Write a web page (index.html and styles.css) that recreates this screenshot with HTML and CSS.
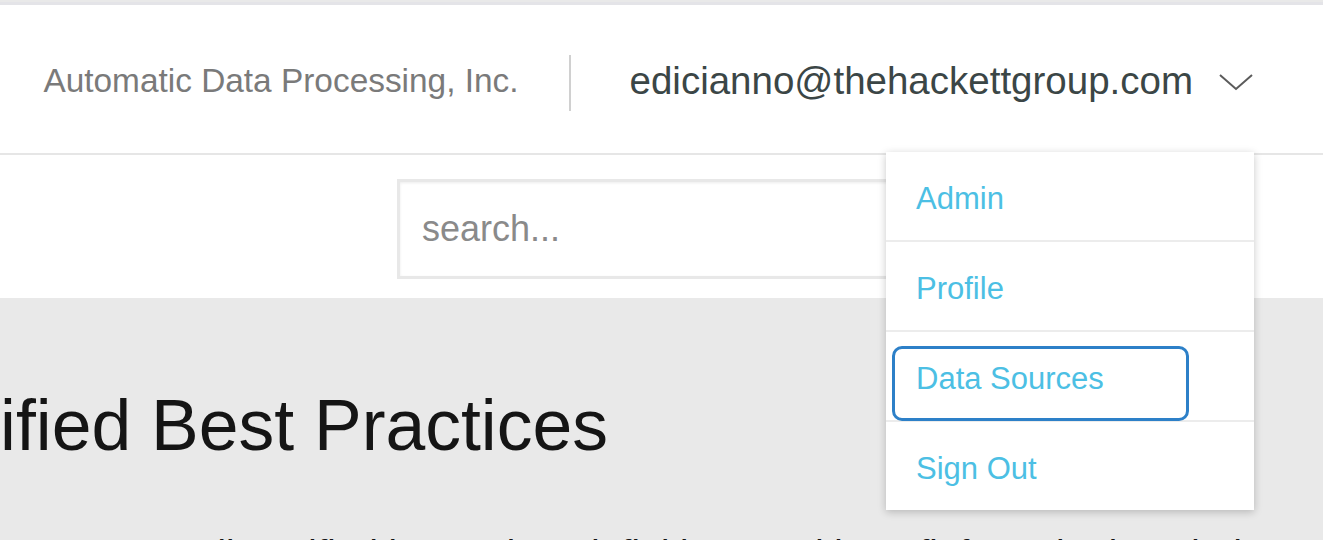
FILE: index.html
```html
<!DOCTYPE html>
<html lang="en">
<head>
    <meta charset="UTF-8">
    <meta name="viewport" content="width=device-width, initial-scale=1.0">
    <title>Hackett Benchmarking</title>
    <link rel="stylesheet" href="styles.css">
</head>
<body>
    <header class="site-header">
        <span class="company">Automatic Data Processing, Inc.</span>
        <span class="divider"></span>
        <button class="user-toggle">
            <span class="user-email">edicianno@thehackettgroup.com</span>
            <svg class="chevron" width="36" height="20" viewBox="0 0 36 20">
                <polyline points="2,3 18,17 34,3" fill="none" stroke="#5b5b5b" stroke-width="2"/>
            </svg>
        </button>
    </header>

    <div class="search-bar">
        <input class="search-input" type="text" placeholder="search...">
    </div>

    <main class="content">
        <h1 class="page-title">ified Best Practices</h1>
        <p class="intro">nt to use all certified by Hackett definitions and benefit from the best industry knowledge</p>
    </main>

    <!-- user menu (open) -->
    <ul class="user-menu">
        <li><a href="#">Admin</a></li>
        <li><a href="#">Profile</a></li>
        <li><a href="#" class="focused">Data Sources</a></li>
        <li><a href="#">Sign Out</a></li>
    </ul>
</body>
</html>
```

FILE: styles.css
```css
* {
    margin: 0;
    padding: 0;
    box-sizing: border-box;
}

body {
    font-family: 'Liberation Sans', Arial, sans-serif;
    background-color: #e9e9e9;
    padding-top: 2px;
    height: 540px;
    overflow: hidden;
    position: relative;
}

.site-header {
    height: 153px;
    background-color: #fff;
    border-top: 3px solid #e4e4e8;
    border-bottom: 2px solid #e6e6e6;
    display: flex;
    align-items: center;
    justify-content: flex-end;
    padding-right: 69px;
}

.company {
    font-size: 33.4px;
    color: #7a7a7a;
    margin-top: 4px;
}

.divider {
    width: 2px;
    height: 56px;
    background-color: #d0d0d0;
    margin: 8px 59px 0 50px;
}

.user-toggle {
    display: flex;
    align-items: center;
    gap: 25px;
    background: none;
    border: none;
    font-family: inherit;
    cursor: pointer;
    margin-top: 4px;
}

.user-email {
    font-size: 38.5px;
    color: #3b4646;
}

.chevron {
    display: block;
    margin-top: 2px;
}

.search-bar {
    height: 143px;
    background-color: #fff;
    display: flex;
    justify-content: center;
    padding-top: 24px;
}

.search-input {
    width: 529px;
    height: 100px;
    border: 3px solid #e8e8e8;
    box-shadow: inset 0 1px 3px rgba(0, 0, 0, 0.08);
    padding: 0 22px;
    font-family: inherit;
    font-size: 36px;
    color: #555;
    outline: none;
}

.search-input::placeholder {
    color: #8a8a8a;
}

.content {
    padding-top: 92px;
    overflow: hidden;
}

.page-title {
    font-weight: normal;
    font-size: 71.5px;
    color: #151515;
    line-height: 1;
}

.intro {
    margin-top: 70px;
    padding-left: 40px;
    font-size: 38px;
    line-height: 44px;
    color: #151515;
    white-space: nowrap;
}

.user-menu {
    list-style: none;
    position: absolute;
    top: 152px;
    left: 886px;
    width: 368px;
    background-color: #fff;
    box-shadow: 0 2px 8px rgba(0, 0, 0, 0.22);
}

.user-menu li {
    height: 90px;
    border-bottom: 2px solid #ececec;
    padding: 14px 6px 0;
}

.user-menu li:last-child {
    border-bottom: none;
    height: 88px;
}

.user-menu a {
    display: flex;
    align-items: center;
    width: 297px;
    height: 75px;
    padding: 0 0 10px 21px;
    border: 3px solid transparent;
    border-radius: 10px;
    font-size: 31px;
    color: #4cbfe4;
    text-decoration: none;
}

.user-menu a.focused {
    border-color: #2d80c8;
}
```
